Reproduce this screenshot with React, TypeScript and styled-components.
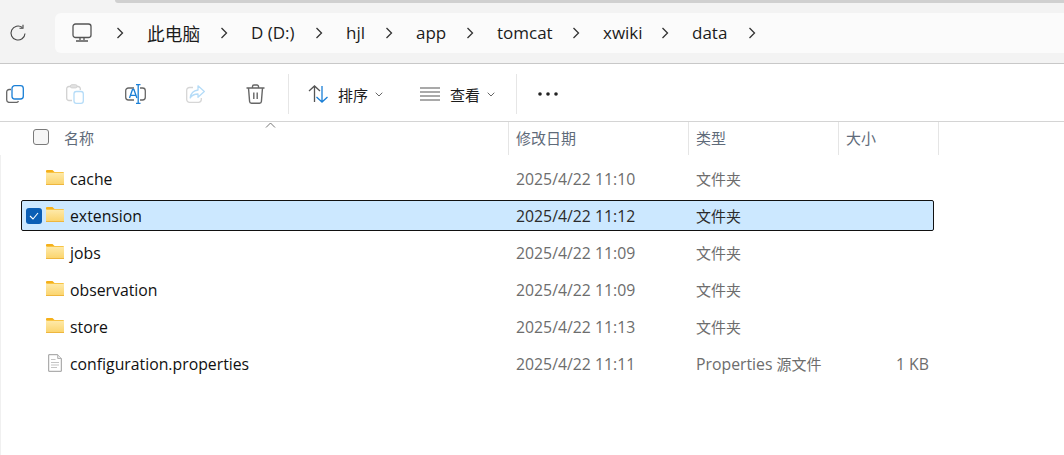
import React from "react";
import styled, { createGlobalStyle } from "styled-components";

const Global = createGlobalStyle`
  html, body { margin: 0; padding: 0; background: #fff; }
  body { font-family: "Open Sans", "Noto Sans CJK SC", sans-serif; width: 1064px; height: 455px; overflow: hidden; }
`;
const Page = styled.div`
  width: 1064px; height: 455px; display: flex; flex-direction: column; box-sizing: border-box;
  overflow: hidden; background: #fff;
`;
const TopArea = styled.div`
  background: #f3f3f3; display: flex; flex-direction: column; flex: none; border-bottom: 1px solid #c8c8c8;
`;
const TabEdge = styled.div`
  height: 3px; margin-left: 115px; background: #d0d0d0; flex: none; border-bottom-left-radius: 3px;
`;
const TopBar = styled.div`
  height: 60px; flex: none; display: flex; align-items: center;
`;
const Refresh = styled.div`
  width: 55px; height: 40px; margin-top: -1px; display: flex; align-items: center; padding-left: 9px; box-sizing: border-box; flex: none;
`;
const Address = styled.div`
  flex: 1; height: 40px; margin-top: -1px; background: #fbfbfb; border-radius: 6px 0 0 6px; display: flex; align-items: center; padding-left: 17px;
  color: #1c1c1c; font-size: 17px;
`;
const Crumb = styled.span<{ $w: number; $cjk?: boolean }>`
  width: ${p => p.$w}px; flex: none; white-space: nowrap; font-size: ${p => (p.$cjk ? "17.7px" : "17px")};
`;
const Slot = styled.span<{ $w: number }>`
  width: ${p => p.$w}px; flex: none; display: flex; align-items: center;
`;
const Toolbar = styled.div`
  height: 58px; flex: none; display: flex; align-items: center; background: #fff; border-bottom: 1px solid #d4d4d4; padding-top: 3px; box-sizing: border-box; font-size: 15px; color: #1c1c1c;
`;
const Tool = styled.div<{ $w: number; $first?: boolean }>`
  width: ${p => p.$w}px; flex: none; display: flex; align-items: center; justify-content: center;
  padding-right: ${p => (p.$first ? "15px" : "0")}; box-sizing: border-box;
`;
const Divider = styled.div`
  width: 1px; height: 40px; background: #e6e6e6; flex: none;
`;
const Labeled = styled.div<{ $w: number; $pl: number; $gap: number }>`
  width: ${p => p.$w}px; padding-left: ${p => p.$pl}px; box-sizing: border-box; flex: none; display: flex; align-items: center; gap: ${p => p.$gap}px;
`;
const Caret = styled.span`
  display: flex; margin-top: 1px; margin-left: -3px;
`;
const Header = styled.div`
  display: grid; grid-template-columns: 508px 180px 150px 101px; height: 33px; flex: none;
  font-size: 15px; color: #5f6b7a; position: relative; width: 939px;
`;
const HeadCell = styled.div<{ $first?: boolean }>`
  display: flex; align-items: center; padding-bottom: 3px; padding-left: ${p => (p.$first ? "33px" : "7px")};
  border-left: ${p => (p.$first ? "none" : "1px solid #e5e5e5")};
  &:last-child { border-right: 1px solid #e5e5e5; }
`;
const SortMark = styled.span`
  position: absolute; left: 265px; top: 0; display: flex;
`;
const EmptyBox = styled.span`
  width: 14px; height: 14px; border: 1px solid #7a7a7a; border-radius: 3px; background: #f6f6f6; margin-right: 15px; flex: none;
`;
const List = styled.div`
  padding-top: 8px; display: flex; flex-direction: column; gap: 6px; flex: 1;
  border-left: 1px solid #f0f0f0;
`;
const Row = styled.div<{ $sel?: boolean }>`
  height: 31px; margin-left: 20px; width: 913px; box-sizing: border-box; flex: none;
  display: grid; grid-template-columns: 487px 180px 150px 93px;
  align-items: center; font-size: 15.8px;
  border: 1px solid ${p => (p.$sel ? "#111" : "transparent")};
  border-radius: 2px;
  background: ${p => (p.$sel ? "#cce8ff" : "transparent")};
`;
const NameCell = styled.div`
  display: flex; align-items: center; color: #111; position: relative; padding-left: 24px; gap: 6px;
`;
const Check = styled.span`
  position: absolute; left: 4px; top: 50%; margin-top: -8px; width: 16px; height: 16px; border-radius: 3px; background: #0a5eb5; display: flex; align-items: center; justify-content: center;
`;
const IconSlot = styled.span`
  width: 18px; height: 18px; display: flex; align-items: center; justify-content: center; flex: none; margin-top: -2px;
`;
const Cell = styled.div<{ $sel?: boolean }>`
  padding-left: 7px; color: ${p => (p.$sel ? "#2b2b2b" : "#6d6d6d")}; white-space: nowrap;
`;
const Cjk = styled.span`
  font-size: 15px;
`;
const SizeCell = styled.div`
  text-align: right; color: #6d6d6d; padding-right: 3px; white-space: nowrap;
`;

const Chev = () => (
  <svg width="9" height="12" viewBox="0 0 9 12" fill="none" stroke="#333" strokeWidth="1.3"><path d="M1.5 1l5 5-5 5" /></svg>
);
const Down = () => (
  <svg width="8" height="5" viewBox="0 0 8 5" fill="none" stroke="#666" strokeWidth="1"><path d="M.7.7L4 4l3.3-3.3" /></svg>
);
const Folder = () => (
  <svg width="18" height="15" viewBox="0 0 18 15">
    <defs>
      <linearGradient id="folderFill" x1="0" y1="0" x2="0" y2="1">
        <stop offset="0" stopColor="#fee9a8" />
        <stop offset="1" stopColor="#fbd56f" />
      </linearGradient>
    </defs>
    <path d="M0 1a1 1 0 0 1 1-1h5.500l2 2H0z" fill="#f5b01a" />
    <rect x="0" y="2" width="18" height="13" rx="1" fill="#f8c445" />
    <rect x="0" y="3" width="18" height="11" fill="url(#folderFill)" />
    <rect x="0" y="14" width="18" height="1" fill="#eeb63e" />
  </svg>
);
const FileDoc = () => (
  <svg width="14" height="18" viewBox="0 0 14 18" fill="none">
    <path d="M.7.7h9L13.300 4.500v12.800H.7z" fill="#fff" stroke="#9a9a9a" />
    <path d="M9.700 .7v3.800h3.600" stroke="#b0b0b0" fill="#ececec" />
    <path d="M3 5.500h4.500M3 8.500h8M3 11h8M3 13.500h6" stroke="#c4c4c4" strokeWidth="1.200" />
  </svg>
);

const rows = [
  { n: "cache", d: "2025/4/22 11:10" },
  { n: "extension", d: "2025/4/22 11:12", sel: true },
  { n: "jobs", d: "2025/4/22 11:09" },
  { n: "observation", d: "2025/4/22 11:09" },
  { n: "store", d: "2025/4/22 11:13" },
  { n: "configuration.properties", d: "2025/4/22 11:11", s: "1 KB", file: true },
];

const path: { t: string; w: number; cjk?: boolean }[] = [
  { t: "此电脑", w: 73, cjk: true },
  { t: "D (D:)", w: 64 },
  { t: "hjl", w: 39 },
  { t: "app", w: 50 },
  { t: "tomcat", w: 75 },
  { t: "xwiki", w: 58 },
  { t: "data", w: 56 },
];

export default function App() {
  return (
    <Page>
      <Global />
      <TopArea>
        <TabEdge />
        <TopBar>
          <Refresh>
            <svg width="18" height="18" viewBox="0 0 18 18" fill="none" stroke="#444" strokeWidth="1.100">
              <path d="M16 9.500A7 7 0 1 1 13.300 3.500" />
              <path d="M14 .8v3.500h-3.500" />
            </svg>
          </Refresh>
          <Address>
            <Slot $w={44}>
              <svg width="20" height="20" viewBox="0 0 20 20" fill="none" stroke="#555" strokeWidth="1.300">
                <rect x="1" y="1" width="18" height="13.500" rx="2.500" />
                <path d="M8 14.500V17M12 14.500V17M4 18h12" />
              </svg>
            </Slot>
            <Slot $w={31}><Chev /></Slot>
            {path.map((c, i) => (
              <React.Fragment key={c.t}>
                <Crumb $w={c.w} $cjk={c.cjk}>{c.t}</Crumb>
                <Slot $w={i === path.length - 1 ? 12 : 31}><Chev /></Slot>
              </React.Fragment>
            ))}
          </Address>
        </TopBar>
      </TopArea>
      <Toolbar>
        <Tool $w={45} $first>
          <svg width="18" height="18" viewBox="0 0 18 18" fill="none">
            <path d="M5 4.500H3.200A2.500 2.500 0 0 0 .7 7v8a2.500 2.500 0 0 0 2.500 2.400h7.300a2.500 2.500 0 0 0 2-1.200" stroke="#666" strokeWidth="1.300" />
            <rect x="6" y=".7" width="11.300" height="13.300" rx="2.800" stroke="#1a7fd6" strokeWidth="1.300" />
          </svg>
        </Tool>
        <Tool $w={60}>
          <svg width="18" height="20" viewBox="0 0 18 20" fill="none">
            <path d="M6 16.500H3a2.300 2.300 0 0 1-2.300-2.300V5A2.300 2.300 0 0 1 3 2.500h9A2.300 2.300 0 0 1 14.300 5v1" stroke="#d2d2d2" strokeWidth="1.300" />
            <rect x="4.500" y=".7" width="6.500" height="3.200" rx="1.300" fill="#e2e2e2" stroke="#d2d2d2" />
            <rect x="8" y="7.500" width="9.300" height="11.800" rx="2.300" stroke="#b5dcf8" strokeWidth="1.300" />
          </svg>
        </Tool>
        <Tool $w={60}>
          <svg width="21" height="20" viewBox="0 0 21 20" fill="none">
            <path d="M9 4H3.500A2.800 2.800 0 0 0 .7 6.800v6.400A2.800 2.800 0 0 0 3.500 16H9M15 4h2.500a2.800 2.800 0 0 1 2.800 2.800v6.400a2.800 2.800 0 0 1-2.800 2.800H15" stroke="#666" strokeWidth="1.300" />
            <path d="M11 .7h4.500M11 19.300h4.500M13.200 .7v18.600" stroke="#1a7fd6" strokeWidth="1.300" />
            <path d="M4.500 14l3-8.500h1.400l3 8.500M5.500 11.300h5.400" stroke="#1a7fd6" strokeWidth="1.300" />
          </svg>
        </Tool>
        <Tool $w={60}>
          <svg width="19" height="18" viewBox="0 0 19 18" fill="none">
            <path d="M7 2.500H3.500A2.800 2.800 0 0 0 .7 5.300v9.200a2.800 2.800 0 0 0 2.800 2.800h9a2.800 2.800 0 0 0 2.800-2.800V13" stroke="#d6d6d6" strokeWidth="1.300" />
            <path d="M12 .8l6.300 5.700-6.300 5.700V9C8.500 9 6 10 4.200 13c.5-4.800 3.300-7.300 7.800-8z" stroke="#b5dcf8" strokeWidth="1.300" strokeLinejoin="round" />
          </svg>
        </Tool>
        <Tool $w={60}>
          <svg width="19" height="20" viewBox="0 0 19 20" fill="none" stroke="#666" strokeWidth="1.400">
            <path d="M.5 4h18M6.500 4V2.500A1.500 1.500 0 0 1 8 1h3a1.500 1.500 0 0 1 1.500 1.500V4" />
            <path d="M2.500 4l1.100 13.500a1.900 1.900 0 0 0 1.900 1.800h8a1.900 1.900 0 0 0 1.900-1.800L16.500 4" />
            <path d="M7.800 8.500v6.500M11.200 8.500v6.500" />
          </svg>
        </Tool>
        <Tool $w={3} />
        <Divider />
        <Labeled $w={112} $pl={19} $gap={10}>
          <svg width="20" height="18" viewBox="0 0 20 18" fill="none" strokeWidth="1.300">
            <path d="M1 6l5.500-5L12 6M6.500 1v16" stroke="#555" />
            <path d="M8.500 12l5.500 5 5.500-5M14 1v16" stroke="#1a7fd6" />
          </svg>
          <span>排序</span>
          <Caret><Down /></Caret>
        </Labeled>
        <Labeled $w={115} $pl={19} $gap={10}>
          <svg width="20" height="14" viewBox="0 0 20 14" fill="none" stroke="#555" strokeWidth="1.200">
            <path d="M0 1h20M0 5h20M0 9h20M0 13h20" />
          </svg>
          <span>查看</span>
          <Caret><Down /></Caret>
        </Labeled>
        <Divider />
        <Tool $w={61}>
          <svg width="20" height="4" viewBox="0 0 20 4" fill="#222">
            <circle cx="2" cy="2" r="1.800" /><circle cx="10" cy="2" r="1.800" /><circle cx="18" cy="2" r="1.800" />
          </svg>
        </Tool>
      </Toolbar>
      <Header>
        <SortMark>
          <svg width="11" height="7" viewBox="0 0 11 7" fill="none" stroke="#777"><path d="M1 5.500L5.500 1 10 5.500" /></svg>
        </SortMark>
        <HeadCell $first>
          <EmptyBox />
          名称
        </HeadCell>
        <HeadCell>修改日期</HeadCell>
        <HeadCell>类型</HeadCell>
        <HeadCell>大小</HeadCell>
      </Header>
      <List>
        {rows.map(r => (
          <Row key={r.n} $sel={r.sel}>
            <NameCell>
              {r.sel && (
                <Check>
                  <svg width="10" height="8" viewBox="0 0 10 8" fill="none" stroke="#fff" strokeWidth="1.100"><path d="M1 4l3 3 5-6" /></svg>
                </Check>
              )}
              <IconSlot>{r.file ? <FileDoc /> : <Folder />}</IconSlot>
              {r.n}
            </NameCell>
            <Cell $sel={r.sel}>{r.d}</Cell>
            <Cell $sel={r.sel}>{r.file ? <>Properties <Cjk>源文件</Cjk></> : <Cjk>文件夹</Cjk>}</Cell>
            <SizeCell>{r.s}</SizeCell>
          </Row>
        ))}
      </List>
    </Page>
  );
}
